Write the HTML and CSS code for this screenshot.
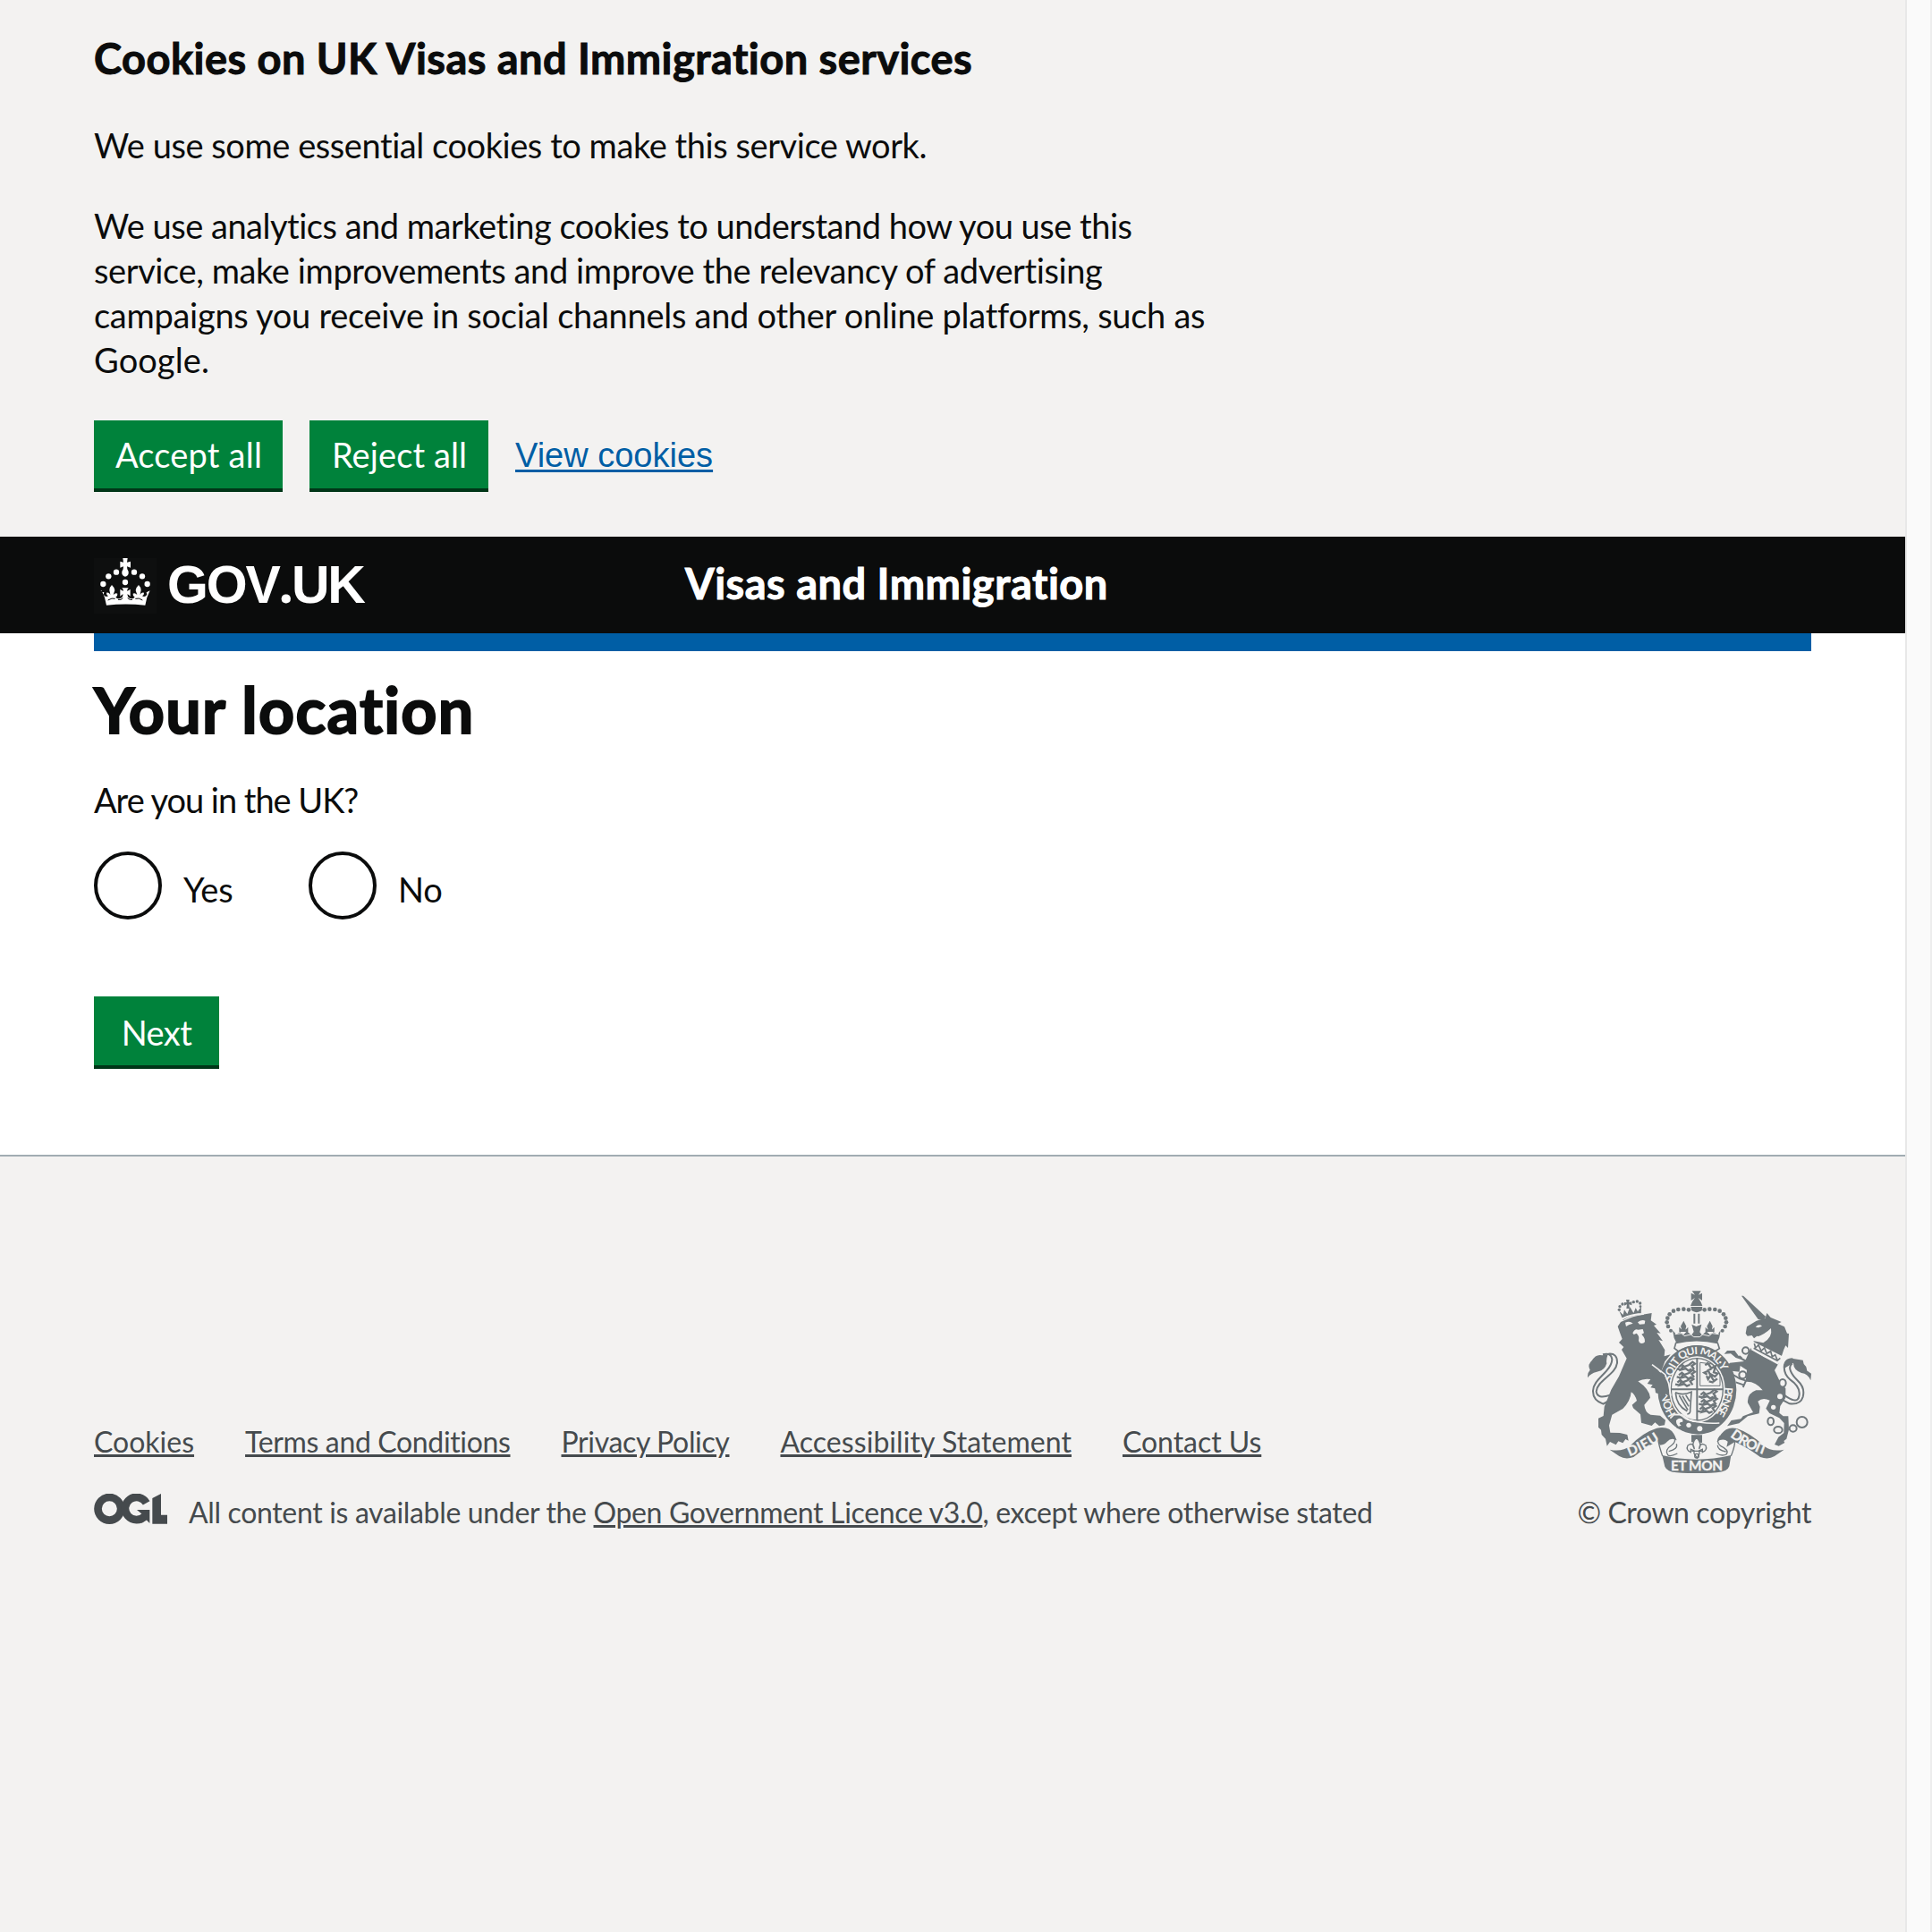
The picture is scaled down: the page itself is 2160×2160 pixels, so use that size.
FILE: index.html
```html
<!DOCTYPE html>
<html lang="en">
<head>
<meta charset="utf-8">
<title>Your location - Visas and Immigration - GOV.UK</title>
<link rel="stylesheet" href="styles.css">
</head>
<body>
<div class="page">
  <section class="cookie-banner">
    <h2 class="cookie-title">Cookies on UK Visas and Immigration services</h2>
    <p class="cookie-text cookie-intro">We use some essential cookies to make this service work.</p>
    <p class="cookie-text"><span class="line-a">We use analytics and marketing cookies to understand how you use this</span><br><span class="line-b">service, make improvements and improve the relevancy of advertising</span><br><span class="line-c">campaigns you receive in social channels and other online platforms, such as</span><br><span class="line-d">Google.</span></p>
    <div class="cookie-actions">
      <button class="button accept">Accept all</button>
      <button class="button reject">Reject all</button>
      <a class="view-link" href="#">View cookies</a>
    </div>
  </section>

  <header class="header">
    <div class="brand">
      <svg class="crown" viewBox="45 102 210 186" fill="#fff">
        <path d="M142 102h16l-2 14 12-3v21l-12-4 1 9q5 7 4 15-2 9-11 10-9-1-11-10-1-8 4-15l1-9-11 4v-21l11 3z"/>
        <circle cx="76" cy="189" r="9.5"/><circle cx="94" cy="163" r="9.5"/><circle cx="120" cy="149" r="9.5"/><circle cx="180" cy="149" r="9.5"/><circle cx="207" cy="163" r="9.5"/><circle cx="224" cy="189" r="9.5"/><circle cx="150" cy="183" r="9.5"/>
        <path d="M67 211l12 6-2 7q7 11 16 5-7-4-6-11 9-2 13 7-1-9-3-15 1-12 8-18 8 7 10 18l-5 15q7-7 14-4 1 9-6 12 8 8 20 2 4-4 5-12-4 1-10 7v-24q5 4 11 6 0-4-5-10h22q-5 6-5 10 6-2 11-6v24q-6-6-10-7 1 8 5 12 12 6 20-2-7-3-6-12 7-3 14 4l-5-15q2-11 10-18 7 6 8 18-2 6-3 15 4-9 13-7 1 7-6 11 9 6 16-5l-2-7 12-6q-12 22-16 49-65-7-130 0-4-27-16-49z"/>
        <path d="M92 243q14-9 24-5M184 238q12-4 24 5M126 241q10 3 16-5M158 236q8 8 16 5" fill="none" stroke="#0b0c0c" stroke-width="3"/>
      </svg>
      <span class="wordmark">GOV<span class="dot">.</span>UK</span>
    </div>
    <span class="service">Visas and Immigration</span>
  </header>

  <main class="main">
    <div class="blue-bar"></div>
    <h1 class="title">Your location</h1>
    <p class="question">Are you in the UK?</p>
    <div class="radios">
      <label class="radio"><span class="ring"></span><span class="radio-label">Yes</span></label>
      <label class="radio"><span class="ring"></span><span class="radio-label">No</span></label>
    </div>
    <button class="button next">Next</button>
  </main>

  <footer class="footer">
    <div class="footer-left">
      <nav class="footer-links">
        <a class="w-cookies" href="#">Cookies</a><a class="w-terms" href="#">Terms and Conditions</a><a class="w-privacy" href="#">Privacy Policy</a><a class="w-access" href="#">Accessibility Statement</a><a class="w-contact" href="#">Contact Us</a>
      </nav>
      <div class="licence">
        <svg class="ogl" viewBox="45 60 246 102">
          <g fill="none" stroke="#454a4d" stroke-width="26"><circle cx="97" cy="110.500" r="38.500"/><path d="M221 91A38 38 0 1 0 216 135"/></g>
          <path fill="#454a4d" d="M189 114h43v45l-11-11-16 10-5-22 8-6zM241 75l29-15v71h21v30h-50z"/>
        </svg>
        <p class="licence-text">All content is available under the <a href="#">Open Government Licence v3.0</a>, except where otherwise stated</p>
      </div>
    </div>
    <div class="footer-right">
      <svg class="crest" viewBox="75 38 750 612">
        <defs>
          <path id="garter-top" d="M341 405C328 310 370 237 442 236C516 237 564 310 551 405"/>
          <path id="garter-left" d="M361 463Q334 423 333 370"/>
          <path id="garter-right" d="M523 270Q584 370 508 475"/>
          <path id="dieu" d="M215 593Q268 574 324 534"/>
          <path id="droit" d="M552 527Q605 569 680 592"/>
        </defs>
        <!-- lion -->
        <g class="ink">
          <path d="M176 158L186 143Q235 119 290 113L287 138L306 151L297 155L320 181L307 179L327 207L313 203L334 237L332 258L353 252L334 276L322 308L308 305L289 288L330 323L343 348L350 396L340 384L333 395L320 397L325 385L302 380L313 368L286 363L293 354L275 350L286 335Q263 331 244 342Q282 368 285 397L265 421Q267 445 286 454L318 457L336 472L333 489L315 492L301 480L290 491L255 481L252 453L228 432L224 421L240 407Q234 386 221 378Q219 408 193 434L157 454L147 490L151 514L183 515L208 521L212 541L202 536L193 549L178 543L170 555L150 545L140 559L135 535L122 521L120 505L111 496V466L128 458L131 427L154 370L180 325L206 265L189 236L196 227L180 212L191 200L183 178Z"/>
          <path d="M75 330Q74 313 83 304Q73 286 89 273Q103 249 124 255L143 252Q136 270 139 282Q132 305 111 309Q85 314 75 330Z"/>
          <path d="M181 106L194 137Q220 119 254 119L255 91L243 108L236 96L229 113L217 93L208 116L198 102L194 119Z"/>
          <path d="M204 68H215L214 77L223 75V87L214 84L216 98H205L207 84L198 88V77L206 78Z"/>
          <circle cx="181" cy="102" r="5"/><circle cx="183" cy="91" r="5"/><circle cx="192" cy="83" r="5"/><circle cx="229" cy="76" r="5"/><circle cx="241" cy="74" r="5"/><circle cx="251" cy="80" r="5"/><circle cx="252" cy="91" r="4"/>
        </g>
        <g class="line">
          <path d="M145 250Q175 247 174 279C171 319 107 338 104 376Q107 403 151 388M126 252Q154 244 157 269C154 311 94 333 93 374Q92 406 127 418L147 407" stroke-width="6"/>
        </g>
        <g class="paper">
          <path d="M201 145Q216 138 227 148Q213 151 204 158ZM243 144Q257 134 268 139L266 150L249 151ZM226 180Q234 164 244 169L260 167L264 180L256 184Q273 203 264 213Q250 219 246 205Q250 190 239 181L230 185Z"/>
          <path d="M189 137Q218 119 263 119L265 113Q221 113 188 130Z"/>
        </g>
        <!-- unicorn -->
        <g class="ink">
          <path d="M591 55L597 55L673 126L663 137L647 134Z"/>
          <path d="M605 181L609 159L641 139L671 130L676 113L689 128L725 143L713 149L735 159L744 181L750 182L747 230L739 222L733 235L725 259L673 239L629 210L643 201L659 193L643 190L633 198L626 188L611 190Z"/>
          <path d="M622 231Q662 264 716 281L702 305L719 341L739 366V397L721 425L718 448L731 459H748L750 504L742 535L733 542L736 548L716 559L702 554L715 529L733 515L734 482L718 465L685 449L673 433L686 406Q662 394 646 409L653 427L650 450L612 459L583 483L543 492L557 473L589 468L596 459L630 446L612 414Q609 383 640 372H662Q639 341 605 343L609 304L587 290L584 310L558 307L547 337L531 347L522 320L535 300L552 280L600 275L588 268L572 263L555 249L533 250L543 239L568 239L582 258L605 270Z"/>
          <path d="M735 298Q728 270 764 266L797 271L800 284Q812 294 810 306L825 316L823 339Q814 316 792 314Q765 304 765 280Z"/>
        </g>
        <g class="line" stroke-width="6">
          <path d="M763 267C724 266 728 315 755 337Q791 362 784 392C781 414 758 406 736 389M761 282C744 294 758 319 780 340Q805 363 797 394Q789 421 752 417L730 405"/>
          <ellipse cx="605" cy="239" rx="11" ry="11"/><ellipse class="fill-paper" cx="595" cy="321" rx="12" ry="12"/><ellipse class="fill-paper" cx="729" cy="348" rx="11" ry="13"/><ellipse cx="689" cy="476" rx="10" ry="13"/><ellipse cx="714" cy="505" rx="14" ry="11"/><ellipse cx="764" cy="500" rx="12" ry="11"/><circle cx="794" cy="479" r="18"/>
          <path d="M583 257L592 264M563 320L585 333L606 340L596 362M572 345L598 354" />
        </g>
        <g class="paper">
          <path d="M626 207L728 258L714 286L624 237Z"/><circle cx="720" cy="393" r="9"/><circle cx="698" cy="429" r="8"/><path d="M638 160Q650 147 660 157L648 162ZM642 193Q667 186 690 164Q696 195 664 213L633 207Z"/>
        </g>
        <path class="line" stroke-width="5" d="M632 231L711 273L721 264M634 215L638 230L648 220L657 240L668 230L676 249L689 241L694 260L704 253L711 270"/>
        <!-- garter and shield -->
        <ellipse class="ink" cx="442" cy="370" rx="132" ry="149"/>
        <ellipse class="paper" cx="442" cy="369" rx="94" ry="111"/>
        <g class="garter-text">
          <text><textPath href="#garter-top" startOffset="64" textLength="282">SOIT QUI MAL·Y</textPath></text>
          <text><textPath href="#garter-left" startOffset="4" textLength="83">HON</textPath></text>
          <text><textPath href="#garter-right" startOffset="98" textLength="102">PENSE</textPath></text>
        </g>
        <ellipse class="line" cx="442" cy="369" rx="87" ry="104" stroke-width="4"/>
        <path class="line" stroke-width="6" d="M442 264V475M355 369H529"/>
        <g class="line" stroke-width="7">
          <path id="lion-a" d="M381 294L391 286L399 293L415 287L427 277L435 283L424 290L432 302M395 291L388 303L404 299L413 306L424 301M374 300L388 303"/>
          <use href="#lion-a" y="27"/><use href="#lion-a" x="-5" y="52"/><use href="#lion-a" x="73" y="93"/><use href="#lion-a" x="74" y="118"/><use href="#lion-a" x="70" y="142"/>
          <path d="M469 288L478 281L490 298L504 291L498 312L511 316L502 326L489 319L479 335L474 324M477 308L466 313L476 319M490 300L479 305L486 320L499 341L510 333M482 342L497 346"/>
          <path d="M452 279V357H519V318L494 284Z" stroke-width="3"/>
          <path d="M369 379Q393 391 423 378L419 437Q421 451 409 452M370 381Q373 424 409 442M382 389L411 438M393 391L414 426M404 388L417 409" stroke-width="5"/>
        </g>
        <path class="ink" d="M366 475Q372 455 391 460L401 470Q444 490 513 486L502 506Q442 534 389 503L374 499Z"/>
        <g class="paper"><circle cx="414" cy="489" r="8"/><circle cx="451" cy="501" r="9"/><path d="M372 473Q382 462 391 468Q397 473 393 479Q385 477 383 484L389 490L380 493Q371 485 372 473Z"/></g>
        <path class="line light" stroke-width="5" d="M352 466L365 453L390 454L414 470Q462 486 517 482"/>
        <!-- lion paw over the garter -->
        <path class="ink" d="M289 290L334 324L343 349L350 397L338 384L331 397L320 398L321 385L303 380Z"/>
        <path class="line light" stroke-width="5" d="M291 286L335 319L347 350L354 391"/>
        <!-- crown -->
        <path class="paper" d="M338 100H546L528 215H355Z"/>
        <g class="ink">
          <path d="M425 39H455L447 52L459 46V71L446 62L455 76L460 89H420L426 75L435 62L422 71V46L435 52Z"/>
          <path d="M421 92H460L458 105Q440 116 424 105ZM430 115H436V148H430ZM445 115H451V148H445Z"/>
          <g id="jewels"><circle cx="414" cy="102" r="7"/><circle cx="397" cy="100" r="7"/><circle cx="379" cy="101" r="7"/><circle cx="363" cy="106" r="7"/><circle cx="350" cy="117" r="7"/><circle cx="343" cy="130" r="7"/><circle cx="341" cy="144" r="7"/><circle cx="345" cy="158" r="7"/><circle cx="354" cy="172" r="6"/></g>
          <use href="#jewels" transform="translate(881 0) scale(-1 1)"/>
          <path d="M360 171L372 184L385 177L397 186L408 174L423 187L431 176L424 151L439 158L457 151L451 177L459 187L473 174L485 186L497 177L511 185L521 171L517 195L510 213Q441 197 373 213L365 197Z"/>
          <path d="M397 139L406 157L402 172H392L387 157ZM485 139L494 157L491 172H480L475 157Z"/>
          <path d="M382 160L390 168H405L412 160V176H382ZM470 160L477 168H493L500 160V176H470Z"/>
        </g>
        <path class="line light" stroke-width="3" d="M368 184L390 181L399 190L421 185L431 193H451L461 185L483 190L492 181L515 184"/>
        <path class="line" stroke-width="5" d="M371 213Q440 197 511 213L517 232L501 242Q441 205 380 242L366 231Z"/>
        <!-- scrolls -->
        <g class="ink">
          <path d="M149 571Q191 580 218 558Q259 514 307 499Q348 491 364 518L374 540Q356 528 341 545Q335 554 317 556L312 541Q269 563 229 596Q202 606 181 593Z"/>
          <path d="M734 571Q692 580 665 558Q623 516 575 500Q542 492 523 519L508 545Q530 531 545 544L541 562L569 545Q614 566 654 596Q681 606 702 593Z"/>
          <path d="M325 590Q439 618 556 590L550 627Q544 646 508 648Q440 653 374 648Q341 645 334 628Z"/>
        </g>
        <g class="line" stroke-width="4">
          <path d="M312 541Q315 561 326 592M364 523Q375 545 356 557Q332 572 344 589Q351 596 376 584M569 545Q567 566 556 592M521 524Q503 544 520 558Q552 573 540 587Q526 594 506 584M373 552Q379 569 347 577M511 556Q510 572 539 578"/>
        </g>
        <g class="scroll-text">
          <text><textPath href="#dieu" startOffset="0" textLength="116">DIEU</textPath></text>
          <text><textPath href="#droit" startOffset="0" textLength="134">DROIT</textPath></text>
          <text x="354" y="642" textLength="174">ET MON</text>
        </g>
        <path class="ink" d="M423 522H459V548L423 546Z"/>
        <path class="paper" stroke="#6f777b" stroke-width="4" d="M440 530Q460 552 449 569Q451 544 471 557Q478 573 460 580V570L449 575L450 584L442 599L432 584V575L421 570V580Q403 573 411 557Q430 544 433 569Q421 552 440 530Z"/>
        <path class="line" stroke-width="4" d="M424 576H459"/><circle class="line" stroke-width="4" cx="441" cy="592" r="7"/>
      </svg>
      <p class="copyright">© Crown copyright</p>
    </div>
  </footer>
</div>
<div class="scrollbar"></div>
</body>
</html>
```
FILE: styles.css
```css
* { box-sizing: border-box; }
body {
  margin: 0;
  display: flex;
  height: 2160px;
  overflow: hidden;
  background: #fff;
  color: #0b0c0c;
  font-family: Lato, "Noto Sans", sans-serif;
  font-size: 38px;
  line-height: 50px;
}
h1, h2, p { margin: 0; }
.page { width: 2130px; height: 2160px; display: flex; flex-direction: column; }
.scrollbar { width: 30px; background: #fafafa; border-left: 2px solid #e8e8e8; border-right: 2px solid #ededed; }

.cookie-banner { height: 600px; padding: 35px 105px 0; background: #f3f2f1; }
.cookie-title { font-size: 47px; line-height: 60px; letter-spacing: 0.45px; margin-bottom: 42px; -webkit-text-stroke: 1px; }
.cookie-text { white-space: nowrap; }
.cookie-intro { margin-bottom: 40px; letter-spacing: -0.44px; }
.line-a { letter-spacing: -0.49px; }
.line-b { letter-spacing: -0.4px; }
.line-c { letter-spacing: -0.28px; }
.line-d { letter-spacing: 0.1px; }
.cookie-actions { display: flex; margin-top: 43px; }
.button {
  display: block;
  height: 76px;
  padding: 13px 0 13px;
  border: 0;
  background: #00823b;
  box-shadow: 0 4px 0 #003618;
  color: #fff;
  font: 38px/50px Lato, "Noto Sans", sans-serif;
  text-align: center;
}
.accept { width: 211px; padding-left: 1px; letter-spacing: 0.2px; }
.reject { width: 200px; padding-left: 1px; margin-left: 30px; letter-spacing: 0.1px; }
.view-link {
  margin: 14px 0 0 30px;
  color: #005ea5;
  font-family: "Liberation Sans", Arial, sans-serif;
  text-decoration-thickness: 3px;
  text-underline-offset: 3px;
}

.header { display: flex; height: 108px; padding-left: 105px; background: #0b0c0c; color: #fff; }
.brand { display: flex; width: 661px; }
.crown { width: 70px; height: 62px; margin-top: 24px; background: #0e0f0f; }
.wordmark {
  margin-left: 12px;
  font: bold 59px/60px "Liberation Sans", Arial, sans-serif;
  letter-spacing: -2.2px;
  padding-top: 24px;
}
.dot { font-family: "Noto Sans", sans-serif; line-height: 0; }
.service { padding-top: 22px; font-size: 47px; font-weight: 700; line-height: 60px; letter-spacing: 0.5px; -webkit-text-stroke: 1px; }

.main { height: 583px; padding: 0 105px; }
.blue-bar { height: 20px; background: #005ea5; }
.title { margin-top: 25px; font-size: 70px; line-height: 80px; letter-spacing: 1.3px; -webkit-text-stroke: 2px; }
.question { margin-top: 36px; letter-spacing: -1.03px; }
.radios { display: flex; margin-top: 33px; }
.radio { display: flex; width: 240px; height: 76px; }
.ring { width: 76px; height: 76px; border: 4px solid #0b0c0c; border-radius: 50%; }
.radio-label { padding: 17px 0 0 24px; letter-spacing: -0.2px; }
.next { width: 140px; margin-top: 86px; height: 77px; padding: 15px 0 12px; letter-spacing: -0.6px; }

.footer {
  flex: 1;
  display: flex;
  align-items: flex-start;
  justify-content: space-between;
  padding: 150px 105px 0;
  border-top: 2px solid #a1acb2;
  background: #f3f2f1;
  color: #454a4d;
  font-size: 32px;
  line-height: 40px;
}
.footer a { color: inherit; text-decoration-thickness: 3px; text-underline-offset: 2px; }
.footer-left { padding-top: 149px; }
.footer-links { display: flex; gap: 57px; }
.footer-links a { white-space: nowrap; }
.w-terms { letter-spacing: -0.35px; }
.w-privacy { letter-spacing: -0.36px; }
.w-access { letter-spacing: 0.06px; }
.w-contact { letter-spacing: -0.05px; }
.licence { display: flex; margin-top: 39px; }
.ogl { width: 82px; height: 34px; margin-top: -1px; }
.licence-text { margin-left: 24px; white-space: nowrap; letter-spacing: -0.34px; }
.footer-right { display: flex; flex-direction: column; align-items: flex-end; }
.crest { width: 250px; height: 204px; }
.copyright { margin-top: 24px; white-space: nowrap; letter-spacing: -0.4px; }
.ink { fill: #6f777b; }
.paper { fill: #f3f2f1; }
.line { fill: none; stroke: #6f777b; }
.fill-paper { fill: #f3f2f1; }
.light { stroke: #f3f2f1; }
.garter-text, .scroll-text { fill: #f3f2f1; font-family: Lato, sans-serif; font-weight: 700; }
.garter-text { font-size: 37px; dominant-baseline: central; }
.scroll-text { font-size: 46px; stroke: #f3f2f1; stroke-width: 1px; }
```
